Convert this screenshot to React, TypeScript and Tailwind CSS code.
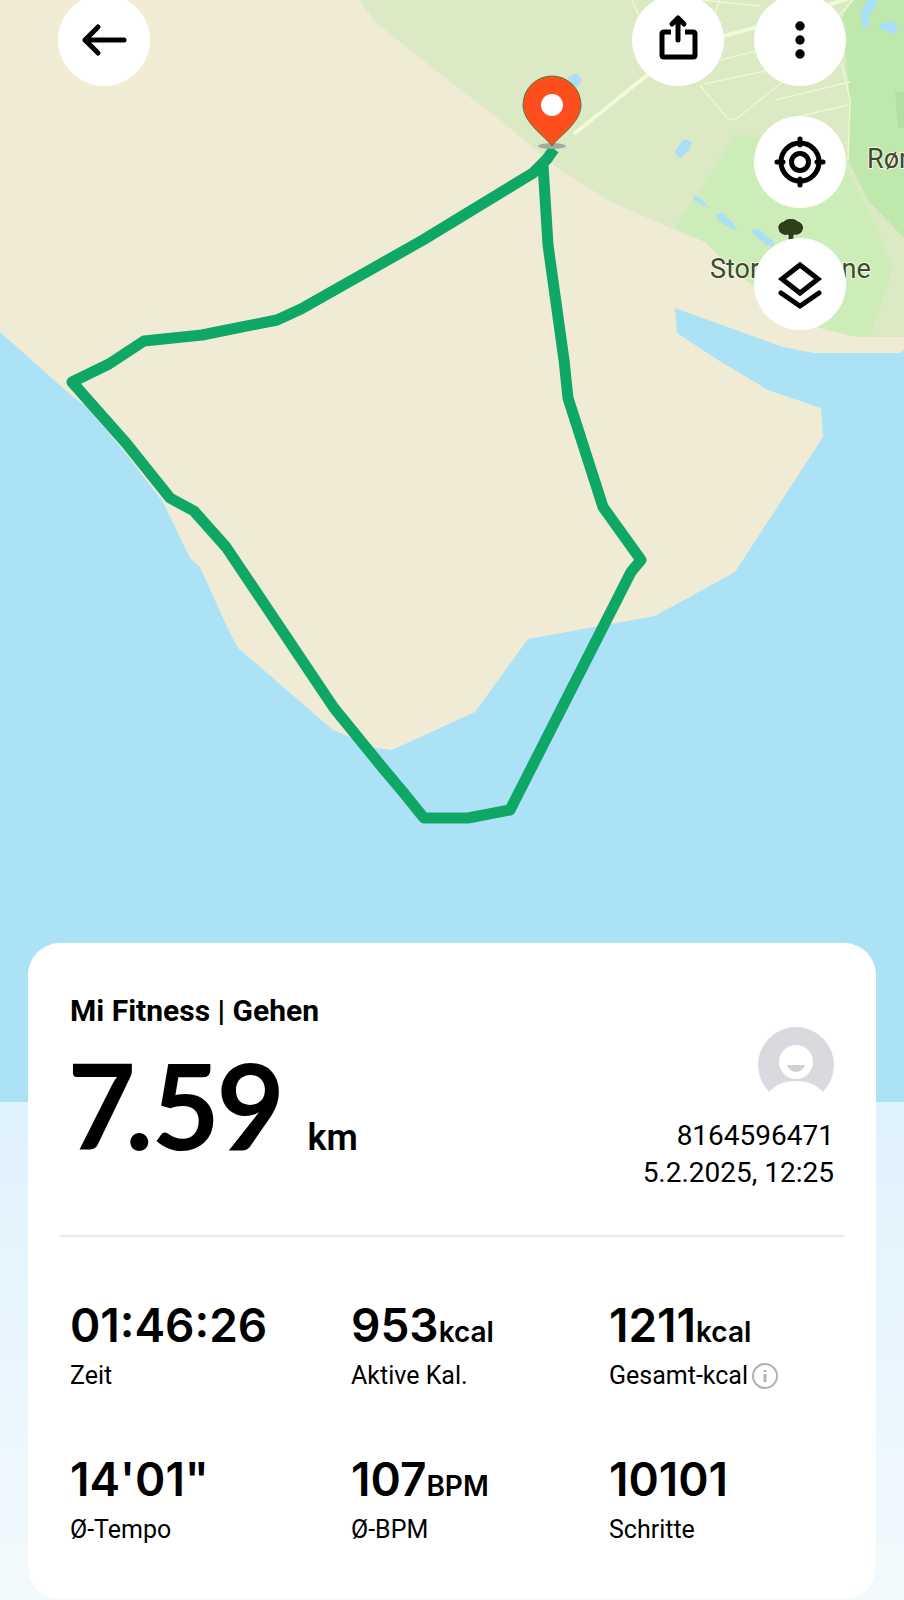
import type { ReactNode } from 'react';

type Stat = {
    value: string;
    unit?: string;
    label: string;
    info?: boolean;
};

const stats: Stat[] = [
    { value: '01:46:26', label: 'Zeit' },
    { value: '953', unit: 'kcal', label: 'Aktive Kal.' },
    { value: '1211', unit: 'kcal', label: 'Gesamt-kcal', info: true },
    { value: '14\'01"', label: 'Ø-Tempo' },
    { value: '107', unit: 'BPM', label: 'Ø-BPM' },
    { value: '10101', label: 'Schritte' },
];

const RoundButton = ({ label, children }: { label: string; children: ReactNode }) => (
    <button type="button" aria-label={label} className="size-[92px] shrink-0 rounded-full bg-white text-black">
        <svg
            viewBox="0 0 92 92"
            className="size-full"
            fill="none"
            stroke="currentColor"
            strokeWidth="5"
            strokeLinecap="round"
            strokeLinejoin="round"
            aria-hidden="true"
        >
            {children}
        </svg>
    </button>
);

const RouteMap = () => (
    <svg viewBox="0 0 904 1102" className="block h-auto w-full bg-[#abe2f6]" role="img" aria-label="Route">
        {/* land */}
        <path
            fill="#f0ebd5"
            d="M0 0H904V349L901 353H813L783 347L675 308L677 333L718 360L768 390L821 408L823 437L735 572L655 616L528 639L475 712L392 750L375 748L333 730L238 648L227 627L200 567L190 558L163 502L123 450L87 407L73 397L0 332Z"
        />
        <path
            fill="#dce9c5"
            d="M359 0L375 22L425 62L500 120L560 170L610 201L670 228L705 242L730 267L770 300L820 328L857 337H904V0Z"
        />
        <path fill="#ccecb8" d="M735 135H800L846 165L866 205L893 267L870 337H857L820 328L770 300L730 267L705 242L674 228L704 185Z" />
        <path fill="#bfe8ac" d="M853 0L842 18L846 60L850 100L848 160L868 200L904 238V0Z" />
        <path fill="#b5dfa1" d="M895 92H904V128H898Z" />

        {/* roads */}
        <g fill="none" stroke="#eef8cf" strokeWidth="1.5" strokeLinejoin="round">
            <path d="M632 0L645 30M719 0L714 20M700 0L760 6M853 0L835 20" />
            <path d="M842 64L850 100L848 160" />
            <path d="M700 85L727 118L735 120L795 72" />
            <path d="M704 84L765 71M720 60L760 50M775 100L850 82M800 116L848 105" />
        </g>
        <path fill="none" stroke="#f3fad9" strokeWidth="4" d="M574 134L646 76L690 45L765 25L800 14L850 -2" />

        {/* ponds */}
        <g fill="#abdff8">
            <path d="M568 77L577 73L582 80L578 87L570 85Z" />
            <path d="M675 151L684 139L692 142L689 150L681 158L676 155Z" />
            <path d="M693 195L700 198L710 208L702 205L694 200Z" />
            <path d="M716 215L722 212L731 221L738 231L728 227L717 219Z" />
            <path d="M752 229L760 230L774 242V247L765 244L753 234Z" />
            <path d="M867 0H878L873 11L869 14V26L862 28L861 12Z" />
            <path d="M879 24L893 20L898 30L894 34L880 29Z" />
        </g>

        <g fontFamily="Roboto, sans-serif" fontSize="27" fill="#3d4a30" stroke="#f2f7e3" strokeWidth="2" paintOrder="stroke">
            <text x="867" y="168">Rømø</text>
            <text x="710" y="278">Stormengene</text>
        </g>
        <path
            fill="#2d4018"
            stroke="#f2f7e3"
            strokeWidth="1"
            d="M788 240V235C783 237 778 232 778 229C777 225 780 222 784 221C786 218 794 217 798 221C802 222 805 227 803 230C802 234 797 236 794 235V240Z"
        />

        <path
            fill="none"
            stroke="#0fa765"
            strokeWidth="11"
            strokeLinejoin="round"
            d="M554 149L547 159L533 173L423 240L301 309L277 320L202 335L144 341L109 364L72 382L126 443L170 498L194 511L226 547L334 708L382 767L403 792L424 818H468L510 810L631 572L641 560L603 507L568 398L564 360L548 245L543 165"
        />

        {/* current position pin */}
        <ellipse cx="552" cy="146" rx="14" ry="3" fill="#a3aaa0" />
        <path
            fill="#fd4f1d"
            stroke="#4f7a35"
            strokeWidth="1"
            d="M552 146C546 137 523 123 523 105A29 29 0 0 1 581 105C581 123 558 137 552 146Z"
        />
        <circle cx="552" cy="105" r="11" fill="#fff" />
    </svg>
);

const Avatar = () => (
    <svg viewBox="0 0 76 76" className="size-[76px]" role="img" aria-label="Profilbild">
        <circle cx="38" cy="38" r="38" fill="#d9dae0" />
        <path fill="#fff" d="M10 66C18 57 27 54 38 54C49 54 58 57 66 66V76H10Z" />
        <circle cx="38" cy="35" r="17" fill="#fff" />
        <path fill="#d0d1d6" d="M29 38H47C46 42 42 45 38 45C34 45 30 42 29 38Z" />
    </svg>
);

const InfoIcon = () => (
    <svg viewBox="0 0 26 26" className="size-[26px]" fill="none" stroke="#b3b3b3" strokeWidth="2" aria-hidden="true">
        <circle cx="13" cy="13" r="12" />
        <path strokeWidth="3" d="M13 11V19M13 7V9" />
    </svg>
);

const StatItem = ({ value, unit, label, info }: Stat) => (
    <div className="flex flex-col gap-1">
        <dd className="font-[Inter,sans-serif] text-[46px] leading-[60px] font-semibold whitespace-nowrap">
            {value}
            {unit && <span className="text-[28px] leading-none">{unit}</span>}
        </dd>
        <dt className="flex items-center gap-1 text-[25px] leading-[34px] whitespace-nowrap">
            {label}
            {info && (
                <button type="button" aria-label="Info zu Gesamt-kcal">
                    <InfoIcon />
                </button>
            )}
        </dt>
    </div>
);

const App = () => {
    return (
        <main className="min-h-screen overflow-hidden bg-linear-to-b from-[#e0f2fd] from-70% to-[#f3fafd] font-[Roboto,sans-serif] text-black">
            <div className="relative">
                <RouteMap />
                <div className="absolute inset-x-0 -top-1.5 flex items-start justify-between px-[58px]">
                    <RoundButton label="Zurück">
                        <path d="M40 33L27 46L40 59M27 46H66" />
                    </RoundButton>
                    <div className="flex gap-[30px]">
                        <RoundButton label="Teilen">
                            <path d="M39 38H32Q30 38 30 40V61Q30 63 32 63H61Q63 63 63 61V40Q63 38 61 38H53" strokeLinecap="butt" />
                            <path d="M46 46V24M40 30L46 24L52 30" />
                        </RoundButton>
                        <div className="flex flex-col gap-[30px]">
                            <RoundButton label="Mehr">
                                <g fill="currentColor" stroke="none">
                                    <circle cx="46" cy="32" r="4.7" />
                                    <circle cx="46" cy="46" r="4.7" />
                                    <circle cx="46" cy="60" r="4.7" />
                                </g>
                            </RoundButton>
                            <RoundButton label="Zentrieren">
                                <circle cx="46" cy="46" r="19" />
                                <circle cx="46" cy="46" r="8.5" />
                                <path d="M46 23V29M46 63V69M23 46H29M63 46H69" />
                            </RoundButton>
                            <RoundButton label="Kartenebenen">
                                <g strokeLinejoin="miter">
                                    <path d="M46 27L64 41L46 55L28 41Z" />
                                    <path d="M27 55L46 68L65 55" />
                                </g>
                            </RoundButton>
                        </div>
                    </div>
                </div>
            </div>

            <section className="relative mx-7 -mt-[159px] rounded-[32px] bg-white px-8 pt-[50px] pb-[52px]">
                <div className="flex items-end justify-between px-2.5">
                    <div className="pb-6">
                        <h1 className="text-[30px] leading-9 font-bold">Mi Fitness | Gehen</h1>
                        <p className="mt-3.5 flex items-baseline gap-6 font-[Lato,sans-serif] text-[118px] leading-[124px] font-bold proportional-nums">
                            7.59
                            <span className="font-[Roboto,sans-serif] text-4xl font-semibold">km</span>
                        </p>
                    </div>
                    <div className="flex flex-col items-end text-[28px] leading-[37px]">
                        <Avatar />
                        <p className="mt-3.5">8164596471</p>
                        <p>5.2.2025, 12:25</p>
                    </div>
                </div>

                <hr className="mt-11 border-t-2 border-[#ececec]" />

                <dl className="mt-[58px] grid grid-cols-[281fr_258fr_225fr] gap-y-14 px-2.5">
                    {stats.map((stat) => (
                        <StatItem key={stat.label} {...stat} />
                    ))}
                </dl>
            </section>
        </main>
    );
};

export default App;
